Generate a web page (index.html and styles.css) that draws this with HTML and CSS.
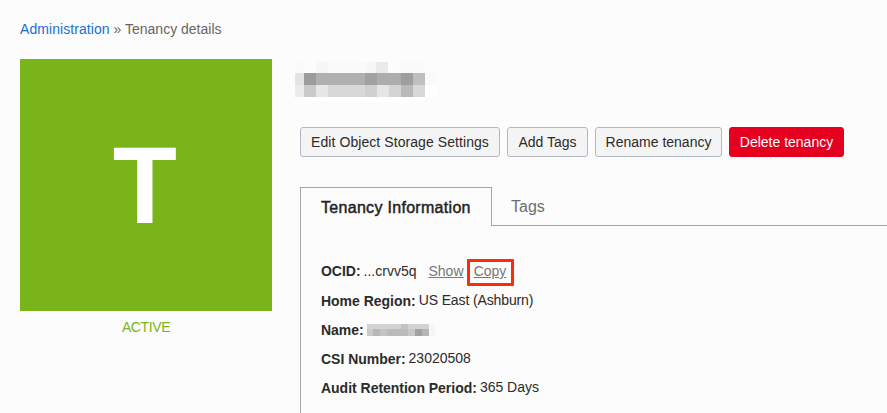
FILE: index.html
```html
<!DOCTYPE html>
<html lang="en">
<head>
<meta charset="utf-8">
<title>Tenancy details</title>
<link rel="stylesheet" href="styles.css">
</head>
<body>
<nav class="breadcrumb"><a href="#">Administration</a> » <span>Tenancy details</span></nav>
<div class="layout">
  <aside class="status">
    <div class="tile"><span>T</span></div>
    <div class="state">ACTIVE</div>
  </aside>
  <main class="details">
    <svg class="masked-title" width="142" height="40" viewBox="0 0 142 40" shape-rendering="crispEdges" aria-hidden="true">
      <path fill="#f7f7f7" d="M21 0h12v11H21zM70 0h11v11H70z"/><path fill="#fafafa" d="M0 0h9v11H0zM33 0h37v11H33zM105 0h25v11h-25zM130 11h12v12h-12z"/><path fill="#eaeaea" d="M81 0h12v11H81z"/>
      <path fill="#e3e3e1" d="M0 11h9v12H0z"/><path fill="#9c9c9c" d="M9 11h12v12H9z"/><path fill="#b0b0b0" d="M21 11h49v12H21z"/><path fill="#a1a1a1" d="M70 11h12v12H70z"/><path fill="#adadad" d="M82 11h24v12H82z"/><path fill="#9e9e9e" d="M106 11h12v12h-12z"/><path fill="#bfbfbf" d="M118 11h12v12h-12z"/>
      <path fill="#ebebe9" d="M0 23h9v12H0z"/><path fill="#cacaca" d="M9 23h12v12H9z"/><path fill="#e6e6e6" d="M21 23h12v12H21zM82 23h12v12H82z"/><path fill="#d8d8d8" d="M33 23h37v12H33z"/><path fill="#d0d0d0" d="M70 23h12v12H70z"/><path fill="#d4d4d4" d="M94 23h12v12H94z"/><path fill="#b9b9b9" d="M106 23h12v12h-12z"/><path fill="#d8d8d8" d="M118 23h12v12h-12z"/>
      <path fill="#fff" d="M9 35h121v5H9zM130 23h12v12h-12z"/>
    </svg>
    <div class="actions">
      <button class="w-edit">Edit Object Storage Settings</button>
      <button class="w-tags">Add Tags</button>
      <button class="w-rename">Rename tenancy</button>
      <button class="w-delete danger">Delete tenancy</button>
    </div>
    <div class="tabs">
      <div class="tab active"><span>Tenancy Information</span></div>
      <div class="tab">Tags</div>
    </div>
    <section class="panel">
      <div class="row"><b class="ocid">OCID:</b><span class="value-ocid">...crvv5q</span><a href="#" class="show">Show</a><span class="marked"><a href="#">Copy</a></span></div>
      <div class="row"><b>Home Region:</b><span class="region">US East (Ashburn)</span></div>
      <div class="row"><b>Name:</b><svg class="masked-name" width="68" height="12" viewBox="0 0 68 12" shape-rendering="crispEdges" aria-hidden="true">
        <path fill="#d3d3d3" d="M0 0h34v5H0zM41 0h21v5H41z"/><path fill="#c3c3c3" d="M34 0h7v5h-7z"/>
        <path fill="#c9c9c9" d="M0 5h6v7H0z"/><path fill="#b7b7b7" d="M6 5h7v7H6z"/><path fill="#c4c4c4" d="M13 5h7v7h-7z"/><path fill="#bbb" d="M20 5h21v7H20z"/><path fill="#c7c7c7" d="M41 5h7v7h-7z"/><path fill="#a1a1a1" d="M48 5h7v7h-7z"/><path fill="#b5b5b5" d="M55 5h7v7h-7z"/><path fill="#f6f6f6" d="M62 0h6v12h-6z"/>
      </svg></div>
      <div class="row"><b>CSI Number:</b><span>23020508</span></div>
      <div class="row"><b>Audit Retention Period:</b><span>365 Days</span></div>
    </section>
  </main>
</div>
</body>
</html>
```
FILE: styles.css
```css
* { box-sizing: border-box; }
body {
  margin: 0;
  height: 413px;
  padding: 20px 0 0 20px;
  overflow: hidden;
  background: #fcfcfc;
  color: #2b2b2b;
  font: 14px/18px "Liberation Sans", Arial, sans-serif;
}
.breadcrumb { height: 39px; color: #666; white-space: nowrap; }
.breadcrumb a { color: #1871cd; text-decoration: none; letter-spacing: 0.07px; }
.layout { display: flex; gap: 28px; height: 354px; }
.status { width: 252px; flex: none; }
.tile {
  display: flex;
  align-items: center;
  justify-content: center;
  height: 252px;
  background: #78b41a;
  color: #fff;
  font-size: 110px;
  font-weight: bold;
  line-height: 126px;
}
.tile span { transform: translateX(-0.7px) scaleX(0.955); }
.state { margin-top: 7px; text-align: center; color: #78b41a; letter-spacing: -0.4px; }
.details { display: flex; flex-direction: column; flex: 1; min-width: 0; }
.masked-title { display: block; flex: none; margin: 3px 0 25px -5px; }
.actions { display: flex; gap: 7px; flex: none; }
button {
  height: 30px;
  padding: 0;
  border: 1px solid #b2b8c2;
  border-radius: 3px;
  background: #f4f4f4;
  color: #2b2b2b;
  font: inherit;
  white-space: nowrap;
}
.w-edit { width: 200px; letter-spacing: 0.07px; }
.w-tags { width: 81px; }
.w-rename { width: 127px; }
.w-delete { width: 115px; }
.danger { border-color: #e5001f; background: #e5001f; color: #fff; }
.tabs { display: flex; flex: none; height: 39px; margin-top: 30px; font-size: 16px; }
.tab {
  flex: 1;
  padding: 11px 19px 0;
  border-bottom: 1px solid #a5a5a5;
  color: #6e6e6e;
}
.tab.active {
  flex: none;
  width: 192px;
  padding: 11px 0 0 20px;
  border: 1px solid #a5a5a5;
  border-bottom: 0;
  color: #222;
  -webkit-text-stroke: 0.45px #222;
  letter-spacing: 0.3px;
}
.panel { flex: 1; padding: 31px 0 0 20px; border-left: 1px solid #a5a5a5; }
.row { display: flex; align-items: center; height: 29px; white-space: nowrap; }
.row b { margin-right: 3px; padding-top: 1px; letter-spacing: -0.02px; }
.row span { padding-bottom: 1px; }
.row .ocid { padding: 0 0 1px; }
.row a { color: #777; }
.region { letter-spacing: -0.12px; }
.show { margin-left: 11px; padding-bottom: 1px; }
.row .marked {
  display: flex;
  align-items: center;
  justify-content: center;
  width: 47px;
  height: 27px;
  margin: 2px 0 0 3px;
  padding-bottom: 3px;
  border: 3px solid #fb2b0b;
  border-radius: 1px;
}
.value-ocid { margin-right: 1px; }
.masked-name { display: block; }
```
